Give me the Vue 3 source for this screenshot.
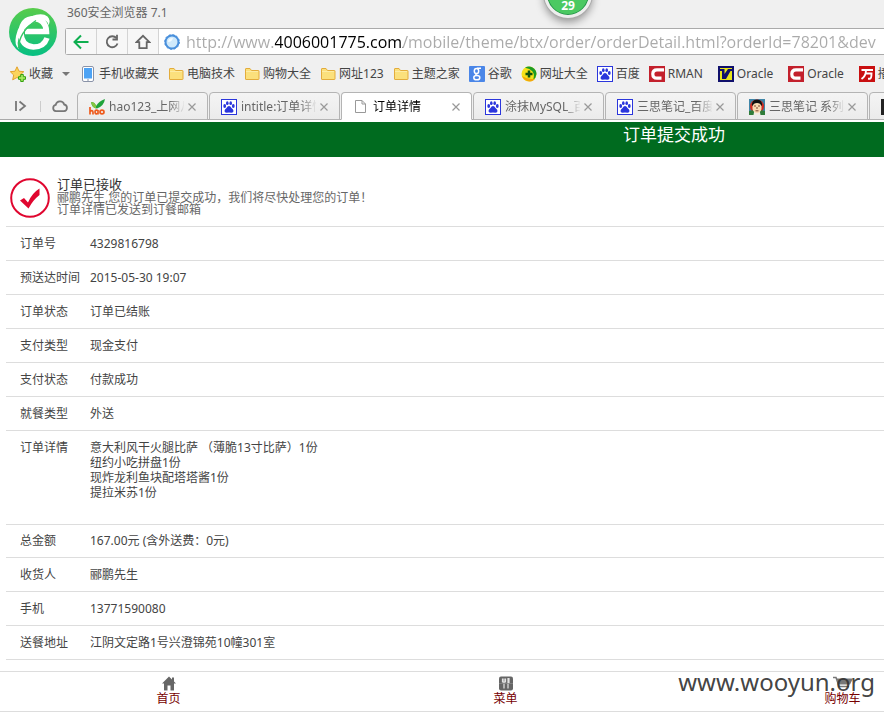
<script setup>
import { ref } from 'vue'

const url = ref('http://www.4006001775.com/mobile/theme/btx/order/orderDetail.html?orderId=78201&dev')

const bookmarks = [
  { icon: 'phone', label: '手机收藏夹' },
  { icon: 'folder', label: '电脑技术' },
  { icon: 'folder', label: '购物大全' },
  { icon: 'folder', label: '网址123' },
  { icon: 'folder', label: '主题之家' },
  { icon: 'google', label: '谷歌' },
  { icon: 'nav', label: '网址大全' },
  { icon: 'paw', label: '百度' },
  { icon: 'red-c', label: 'RMAN', wide: true },
  { icon: 'yellow-v', label: 'Oracle', wide: true },
  { icon: 'red-c', label: 'Oracle', wide: true },
  { icon: 'wan', label: '播' },
]

const tabs = [
  { icon: 'hao', title: 'hao123_上网从这里' },
  { icon: 'paw', title: 'intitle:订单详情' },
  { icon: 'page', title: '订单详情', active: true },
  { icon: 'paw', title: '涂抹MySQL_百度' },
  { icon: 'paw', title: '三思笔记_百度搜' },
  { icon: 'face', title: '三思笔记 系列文' },
  { icon: 'dark', title: '' },
]

const rows = [
  { label: '订单号', lines: ['4329816798'] },
  { label: '预送达时间', lines: ['2015-05-30 19:07'] },
  { label: '订单状态', lines: ['订单已结账'] },
  { label: '支付类型', lines: ['现金支付'] },
  { label: '支付状态', lines: ['付款成功'] },
  { label: '就餐类型', lines: ['外送'] },
  {
    label: '订单详情',
    kind: 'items',
    lines: ['意大利风干火腿比萨 （薄脆13寸比萨）1份', '纽约小吃拼盘1份', '现炸龙利鱼块配塔塔酱1份', '提拉米苏1份'],
  },
  { label: '总金额', kind: 'total', lines: ['167.00元 (含外送费：0元)'] },
  { label: '收货人', lines: ['郦鹏先生'] },
  { label: '手机', lines: ['13771590080'] },
  { label: '送餐地址', lines: ['江阴文定路1号兴澄锦苑10幢301室'] },
]
</script>

<template>
  <div class="window">
    <svg class="sprite" aria-hidden="true">
      <symbol id="i-phone" viewBox="0 0 16 16">
        <rect x="2.5" y=".5" width="11" height="15" rx="1.5" fill="#fff" stroke="#8a93a8" />
        <rect x="4" y="2" width="8" height="10.5" fill="#4da3f5" />
        <path d="M7 14h2" stroke="#8a93a8" />
      </symbol>
      <symbol id="i-folder" viewBox="0 0 16 16">
        <path d="M1.5 3q0-.5.5-.5h4l1.5 2h7q.5 0 .5.5v8q0 .5-.5.5h-12.500q-.5 0-.5-.5z" fill="#fbe07c" stroke="#e3ac3c" />
        <path d="M2 5.500h12" stroke="#fdeca4" />
      </symbol>
      <symbol id="i-google" viewBox="0 0 16 16">
        <rect width="16" height="16" rx="1" fill="#4a86e8" />
        <ellipse cx="7.500" cy="5" rx="2.200" ry="2.600" fill="none" stroke="#fff" stroke-width="1.500" />
        <path d="M8 2.200h4M7.500 7.600q-1.500 1.200.5 1.900" fill="none" stroke="#fff" stroke-width="1.400" />
        <ellipse cx="7.800" cy="11.700" rx="3" ry="2.100" fill="none" stroke="#fff" stroke-width="1.500" />
      </symbol>
      <symbol id="i-nav" viewBox="0 0 16 16">
        <circle cx="8" cy="8" r="7.500" fill="#f7e218" />
        <path d="M4 1.800A7.500 7.500 0 0 1 15.500 8Q15 12 12 14q2-5-.5-8.500Q9 2.500 4 1.800z" fill="#1c9c25" />
        <path d="M1 10q2 5 8 5.500 4-.5 5-3-6 2-13-2.500z" fill="#f2a70d" />
        <path d="M8 4.500v7M4.500 8h7" stroke="#10530f" stroke-width="2.500" />
      </symbol>
      <symbol id="i-paw" viewBox="0 0 16 16">
        <rect x=".5" y=".5" width="15" height="15" fill="#fff" stroke="#2b36dc" />
        <g fill="#2b36dc">
          <ellipse cx="3.700" cy="7" rx="1.400" ry="1.900" />
          <ellipse cx="6.300" cy="4.200" rx="1.300" ry="1.900" />
          <ellipse cx="9.700" cy="4.200" rx="1.300" ry="1.900" />
          <ellipse cx="12.300" cy="7" rx="1.400" ry="1.900" />
          <path d="M8 7q1.500 0 2.500 2 2 1.500 2 3 0 1.800-2 1.800-1.300-.4-2.500-.4t-2.500.4q-2 0-2-1.800 0-1.500 2-3Q6.500 7 8 7z" />
        </g>
      </symbol>
      <symbol id="i-red-c" viewBox="0 0 16 16">
        <rect width="16" height="16" fill="#c3202c" />
        <path d="M15 3.800H8Q3.800 3.800 3.800 8T8 12.200h4.500" fill="none" stroke="#fff" stroke-width="3.200" />
      </symbol>
      <symbol id="i-yellow-v" viewBox="0 0 16 16">
        <rect width="16" height="16" fill="#10106c" />
        <path d="M2 2h12v12H2z" fill="#e9e51c" />
        <path d="M1 3h5.500v5L10 3h4v2h-1.500L8 13H4V5H1z" fill="#10106c" />
      </symbol>
      <symbol id="i-wan" viewBox="0 0 16 16">
        <rect width="16" height="16" fill="#c90f10" />
        <path d="M2.500 4h11.500M7 4q0 6-4.500 9M6.500 7.500h6q0 5-1.700 5.300H9" fill="none" stroke="#fff" stroke-width="1.900" />
      </symbol>
      <symbol id="i-hao" viewBox="0 0 16 16">
        <path d="M2 3q4 0 5 4Q10 2 16 0q-1 7-8 9.500Q3 9 2 3z" fill="#1fa33b" />
        <path d="M2 3q4 0 5 4v2.500Q3 8.500 2 3z" fill="#87c540" />
        <path d="M1 8v7.500M1 12.500q3-2 3 1v2M9 11.500q-3-1-3 1.500t3 1.500M9 11v4.500M11 13a2 1.800 0 1 0 4 0 2 1.800 0 1 0-4 0" fill="none" stroke="#ee5a1c" stroke-width="1.700" />
      </symbol>
      <symbol id="i-page" viewBox="0 0 16 16">
        <path d="M2.500 1.500h6.500l3.500 3.500v8.500h-10z M9 1.500v3.500h3.500" fill="#fff" stroke="#999" />
      </symbol>
      <symbol id="i-face" viewBox="0 0 16 16">
        <rect width="16" height="16" fill="#3f86a8" />
        <circle cx="8" cy="7.500" r="7" fill="#cf2b22" />
        <path d="M0 12l5-1h6l5 1v4H0z" fill="#2f7d3a" />
        <path d="M4.500 16l1-5h5l1 5z" fill="#f0ece4" />
        <path d="M3.500 5q0-3 4.500-3t4.500 3v5q-1 4-4.500 4t-4.500-4z" fill="#f8d9b2" />
        <path d="M2.800 6Q3 .8 8 .8T13.200 6l-1 1q-.5-3-4.200-3T3.800 7z" fill="#111" />
        <path d="M5 7h2M9 7h2M8 8v2M6.500 11.800h3" stroke="#6b3520" stroke-width=".9" />
      </symbol>
      <symbol id="i-dark" viewBox="0 0 16 16">
        <rect width="16" height="16" fill="#222" />
      </symbol>
    </svg>

    <header class="chrome">
      <div class="top">
        <svg class="logo" viewBox="0 0 48 48" aria-hidden="true">
          <defs>
            <linearGradient id="lg" x1="0" y1="0" x2="0" y2="1">
              <stop offset="0" stop-color="#58cc4b" />
              <stop offset="1" stop-color="#06bf83" />
            </linearGradient>
          </defs>
          <circle cx="24" cy="24" r="24" fill="url(#lg)" />
          <path d="M38 30Q35 39 24.500 39 12 38 12 24.500 13 11 25 10.500 37 11.500 37.500 23.500H16" fill="none" stroke="#fff" stroke-width="5.500" />
          <path d="M7 28Q10 14 22 8.500 33 4 38.500 8.500 42 12 39.500 17.500 39 12 33 12 19 14 11 27 7 35 10 41 5 37 7 28z" fill="#fff" />
          <path d="M9.500 40Q10 24 27 12.500" fill="none" stroke="#37c665" stroke-width="1.500" />
        </svg>
        <div class="top-main">
          <div class="app-name">360安全浏览器 7.1</div>
          <div class="address">
            <button type="button" class="nav-btn" aria-label="后退">
              <svg viewBox="0 0 16 16"><path d="M15.500 8H1.500M8 1.500L1.500 8 8 14.500" fill="none" stroke="#0faf50" stroke-width="2" /></svg>
            </button>
            <button type="button" class="nav-btn" aria-label="刷新">
              <svg viewBox="0 0 16 16"><path d="M12.500 4.200A5.500 5.500 0 1 0 13.500 9.500" fill="none" stroke="#666" stroke-width="1.800" /><path d="M13 .8v4.700H8.500" fill="none" stroke="#666" stroke-width="1.800" /></svg>
            </button>
            <button type="button" class="nav-btn" aria-label="主页">
              <svg viewBox="0 0 16 16"><path d="M1.500 8.200L8 1.800l6.500 6.400h-2.800v6H4.300v-6z" fill="none" stroke="#666" stroke-width="1.800" /></svg>
            </button>
            <label class="url">
              <svg class="site" viewBox="0 0 16 16" aria-hidden="true">
                <circle cx="8" cy="8" r="6.500" fill="#cfe9fb" stroke="#4a90dc" stroke-width="2" />
                <circle cx="8" cy="8" r="7.400" fill="none" stroke="#4a90dc" stroke-width="1" stroke-dasharray="2 1.900" />
                <path d="M4 8q0-4 5-4-1 4-5 4z" fill="#f4fbff" />
              </svg>
              <input v-model="url" class="url-input" type="text" aria-label="地址" spellcheck="false" />
            </label>
          </div>
        </div>
        <div class="badge">29</div>
      </div>

      <nav class="bookmarks">
        <button type="button" class="mark fav">
          <svg class="ico" viewBox="0 0 16 16" aria-hidden="true">
            <path d="M7 .8l2 4.400 4.800.5-3.600 3.300 1 4.800L7 11.500l-4.300 2.300 1-4.800L.3 5.700l4.700-.5z" fill="#fbd45c" stroke="#e2a12d" />
            <path d="M10.700 8.500h2.600v2.200h2.200v2.600h-2.200v2.200h-2.600v-2.200H8.500v-2.600h2.200z" fill="#a5ea5a" stroke="#33a010" />
          </svg>
          收藏
          <span class="caret"></span>
        </button>
        <a v-for="(b, i) in bookmarks" :key="i" href="#" class="mark" :class="{ wide: b.wide }">
          <svg class="ico" aria-hidden="true"><use :href="'#i-' + b.icon" /></svg>{{ b.label }}
        </a>
      </nav>

      <div class="tabbar">
        <div class="tools">
          <button type="button" class="tool" aria-label="侧栏">
            <svg viewBox="0 0 16 16"><path d="M3 3v10M6.500 3.500L12 8l-5.500 4.500" fill="none" stroke="#777" stroke-width="1.800" /></svg>
          </button>
          <span class="sep"></span>
          <button type="button" class="tool" aria-label="云">
            <svg viewBox="0 0 16 16"><path d="M4 13.200a3.200 3.200 0 0 1-.3-6.300 4.400 4.400 0 0 1 8.500-.4A3.400 3.400 0 0 1 12 13.200z" fill="none" stroke="#777" stroke-width="1.800" /></svg>
          </button>
        </div>
        <div v-for="(t, i) in tabs" :key="i" class="tab" :class="{ active: t.active }">
          <svg class="ico" aria-hidden="true"><use :href="'#i-' + t.icon" /></svg>
          <span class="tab-title">{{ t.title }}</span>
          <button type="button" class="close" aria-label="关闭">
            <svg viewBox="0 0 8 8"><path d="M.5.5l7 7M7.500.5l-7 7" stroke="#999" stroke-width="1.200" /></svg>
          </button>
        </div>
      </div>
    </header>

    <main class="page">
      <h1 class="title">订单提交成功</h1>
      <section class="notice">
        <svg class="ok" viewBox="0 0 40 40" aria-hidden="true">
          <circle cx="20" cy="20" r="18.800" fill="#fff" stroke="#e0062f" stroke-width="2" />
          <path d="M10 22.500l4-2.500 4 4.500Q22 15 29.500 10.500V17Q23 22 18.500 30.500z" fill="#e0062f" />
        </svg>
        <div class="notice-text">
          <h2>订单已接收</h2>
          <p>郦鹏先生,您的订单已提交成功，我们将尽快处理您的订单！</p>
          <p>订单详情已发送到订餐邮箱</p>
        </div>
      </section>
      <table class="order">
        <tbody>
          <tr v-for="r in rows" :key="r.label" :class="r.kind">
            <th scope="row">{{ r.label }}</th>
            <td><div v-for="l in r.lines" :key="l">{{ l }}</div></td>
          </tr>
        </tbody>
      </table>
      <nav class="menu">
        <a href="#">
          <svg viewBox="0 0 14 14" aria-hidden="true"><path d="M7 0L0 7h2v7h3.500V9h3v5H12V7h2l-2-2V1h-2v2z" fill="#666" /></svg>
          首页
        </a>
        <a href="#">
          <svg viewBox="0 0 14 14" aria-hidden="true"><rect width="14" height="14" rx="2" fill="#666" /><path d="M5 2v10M3.500 2v3.500h3V2M9 12V2h1v5" fill="none" stroke="#e4e4e4" stroke-width="1.200" /><path d="M0 7h14" stroke="#888" stroke-width=".8" /></svg>
          菜单
        </a>
        <a href="#">
          <svg class="cart" viewBox="0 0 20 14" aria-hidden="true"><path d="M0 1h3l3 9h10" fill="none" stroke="#777" stroke-width="1.500" /><path d="M3.500 2H20l-3 6H5.500z" fill="#777" /></svg>
          购物车
        </a>
      </nav>
    </main>
    <div class="watermark">www.wooyun.org</div>
  </div>
</template>

<style>
body {
  background: #fff;
}
</style>

<style scoped>
.window {
  position: relative;
  overflow: hidden;
  font: 12px/16px 'Noto Sans', 'Noto Sans CJK SC', sans-serif;
  color: #444;
}
.window * {
  box-sizing: border-box;
}
.sprite {
  position: absolute;
  width: 0;
  height: 0;
}
button {
  display: flex;
  align-items: center;
  justify-content: center;
  margin: 0;
  padding: 0;
  border: 0;
  background: none;
  font: inherit;
  color: inherit;
}
a {
  color: inherit;
  text-decoration: none;
}
.chrome {
  background: #f0f0f0;
  overflow: hidden;
}
.top {
  position: relative;
  display: flex;
  gap: 8px;
  padding-left: 9px;
}
.logo {
  flex: none;
  width: 48px;
  height: 48px;
  margin-top: 8px;
}
.top-main {
  flex: 1;
  min-width: 0;
}
.app-name {
  padding: 5px 2px 7px;
  color: #666;
}
.address {
  display: flex;
  height: 27px;
  border: 1px solid #aaa;
  border-right: 0;
  border-radius: 3px 0 0 3px;
  background: #fff;
}
.nav-btn {
  flex: none;
  width: 31px;
  background: #f7f7f7;
  border-right: 1px solid #d4d4d4;
}
.nav-btn svg {
  width: 16px;
  height: 16px;
}
.url {
  flex: 1;
  display: flex;
  align-items: center;
  gap: 6px;
  min-width: 0;
  padding-left: 5px;
}
.site {
  flex: none;
  width: 16px;
  height: 16px;
}
.url-input {
  flex: 1;
  min-width: 0;
  height: 24px;
  padding: 0;
  border: 0;
  outline: 0;
  font: 16px/24px 'Open Sans', sans-serif;
  color: transparent;
  background: linear-gradient(90deg, #aaa 89px, #000 89px, #000 217px, #aaa 217px);
  background-clip: text;
}
.badge {
  position: absolute;
  left: 544px;
  top: -30px;
  width: 48px;
  height: 48px;
  padding-top: 26px;
  border: 3px solid #eee;
  border-radius: 50%;
  background: #4bc962;
  box-shadow: inset 0 0 0 1px #26924b, 0 0 0 1px #aaa, 0 4px 8px #0006;
  color: #fff;
  font-weight: bold;
  line-height: 14px;
  text-align: center;
}
.bookmarks {
  display: flex;
  align-items: center;
  gap: 9px;
  height: 36px;
  padding-left: 10px;
  white-space: nowrap;
}
.mark {
  flex: none;
  display: flex;
  align-items: center;
  gap: 3px;
}
.wide {
  margin-right: 6px;
}
.fav {
  margin-right: 1px;
}
.caret {
  margin-left: 6px;
  border: 4px solid transparent;
  border-top-color: #777;
  border-bottom: 0;
}
.ico {
  flex: none;
  width: 16px;
  height: 16px;
}
.tabbar {
  display: flex;
  gap: 1px;
  height: 30px;
  background: linear-gradient(#f0f0f0 27px, #aaa 27px, #aaa 28px, #fff 28px);
}
.tools {
  flex: none;
  display: flex;
  align-items: center;
  width: 76px;
  height: 28px;
  padding-left: 13px;
}
.tool svg {
  width: 16px;
  height: 16px;
}
.sep {
  width: 1px;
  height: 11px;
  margin: 0 11px;
  background: #ccc;
}
.tab {
  flex: none;
  display: flex;
  align-items: center;
  gap: 4px;
  width: 131px;
  height: 28px;
  padding: 2px 11px 0;
  border: 1px solid #b4b4b4;
  border-radius: 4px 4px 0 0;
  background: linear-gradient(#f4f4f4, #ebebeb);
  color: #666;
}
.tab.active {
  background: #fff;
  border-bottom-color: #fff;
  color: #000;
}
.tab-title {
  flex: 1;
  overflow: hidden;
  white-space: nowrap;
  mask-image: linear-gradient(90deg, #000 60px, transparent 76px);
}
.close {
  width: 8px;
  height: 8px;
}
.close svg {
  width: 8px;
  height: 8px;
}
.page {
  width: max(100%, 1348px);
}
.title {
  margin: 0;
  height: 35px;
  background: #006b1f;
  color: #fff;
  font-size: 17px;
  font-weight: normal;
  line-height: 26px;
  text-align: center;
}
.notice {
  display: flex;
  gap: 7px;
  padding: 21px 10px 8px;
}
.ok {
  width: 40px;
  height: 40px;
}
.notice-text {
  line-height: 12px;
  color: #666;
}
.notice-text h2 {
  margin: 0 0 2px;
  font-size: 13px;
  font-weight: normal;
  color: #333;
}
.notice-text p {
  margin: 0;
}
.order {
  width: calc(100% - 12px);
  margin: 0 6px;
  border-spacing: 0;
  border-bottom: 1px solid #ddd;
  line-height: 15px;
}
.order th,
.order td {
  padding: 9px 0;
  border-top: 1px solid #ddd;
  font-weight: normal;
  text-align: left;
  vertical-align: top;
}
.order th {
  width: 84px;
  padding-left: 14px;
}
.order .items td {
  padding-bottom: 24px;
}
.order .total th,
.order .total td {
  padding-top: 8px;
}
.menu {
  display: grid;
  grid-template-columns: repeat(4, 1fr);
  margin-top: 11px;
  padding: 4px 0 5px;
  border-top: 1px solid #ddd;
  border-bottom: 1px solid #ddd;
  color: #700;
}
.menu a {
  display: flex;
  flex-direction: column;
  align-items: center;
  line-height: 15px;
}
.menu svg {
  width: 14px;
  height: 15px;
}
.menu .cart {
  width: 20px;
}
.watermark {
  position: absolute;
  right: 9px;
  bottom: 14px;
  color: #333e;
  font: 24px/32px 'Noto Sans', sans-serif;
}
</style>
